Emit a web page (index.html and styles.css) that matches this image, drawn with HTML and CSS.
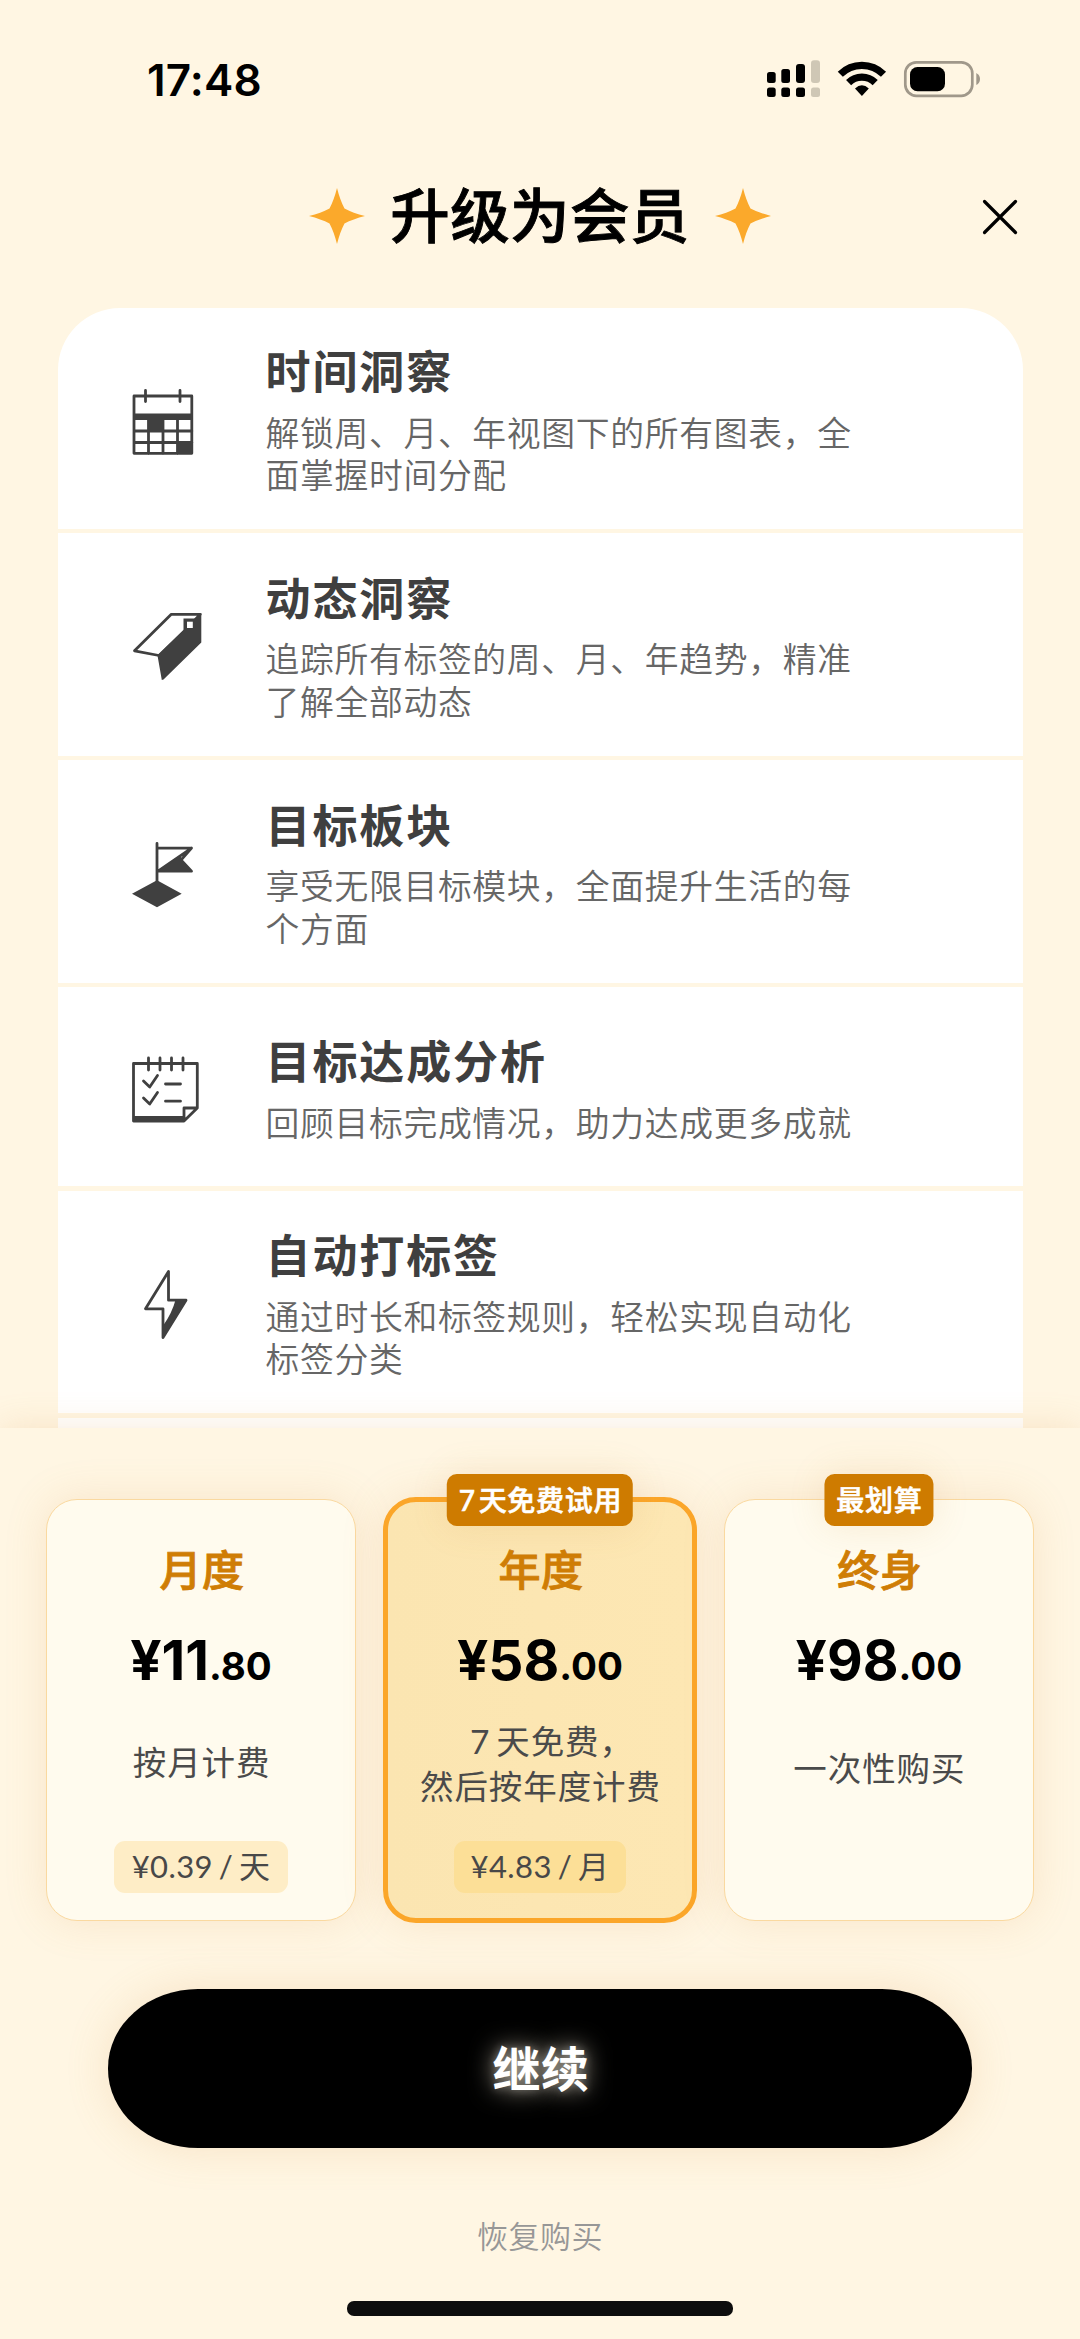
FILE: index.html
```html
<!DOCTYPE html>
<html lang="zh-CN">
<head>
<meta charset="utf-8">
<title>升级为会员</title>
<link rel="stylesheet" href="styles.css">
</head>
<body>
<div class="screen">
  <div class="status">
    <span class="time">17:48</span>
    <svg class="status-icons" width="214" height="40" viewBox="767 59 214 40">
      <g>
        <rect x="767" y="72" width="8.7" height="11" rx="2.5"/><rect x="781.3" y="69" width="8.7" height="14" rx="2.5"/><rect x="796" y="64" width="9" height="19" rx="3"/>
        <rect x="767" y="87.5" width="8.7" height="9.5" rx="2.5"/><rect x="781.3" y="87.5" width="8.7" height="9.5" rx="2.5"/><rect x="796" y="87.5" width="9" height="9.5" rx="2.5"/>
      </g>
      <g fill="#cfc7b5"><rect x="811" y="60.3" width="9" height="22.7" rx="3"/><rect x="811" y="87.5" width="9" height="9.5" rx="2.5"/></g>
      <g fill="none" stroke="#000" stroke-width="7.2">
        <path d="M840.300 74.300 A30.500 30.500 0 0 1 883.500 74.300"/>
        <path d="M848.600 82.600 A18.800 18.800 0 0 1 875.200 82.600"/>
      </g>
      <path d="M861.900 96 L855 88.600 Q861.900 81.800 868.800 88.600 Z"/>
      <rect x="905.300" y="62.300" width="67" height="33.500" rx="11" fill="none" stroke="#a0988a" stroke-width="2.700"/>
      <rect x="910" y="67" width="35" height="24.300" rx="7.500"/>
      <path d="M976.300 73 Q980 75 980 79 T976.300 85 Z" fill="#a0988a"/>
    </svg>
  </div>
  <header class="header">
    <svg class="star" viewBox="0 0 56 56"><path d="M28 0 Q31 12 35.500 20.500 Q44 25 56 28 Q44 31 35.500 35.500 Q31 44 28 56 Q25 44 20.500 35.500 Q12 31 0 28 Q12 25 20.500 20.500 Q25 12 28 0Z"/></svg>
    <h1>升级为会员</h1>
    <svg class="star" viewBox="0 0 56 56"><path d="M28 0 Q31 12 35.500 20.500 Q44 25 56 28 Q44 31 35.500 35.500 Q31 44 28 56 Q25 44 20.500 35.500 Q12 31 0 28 Q12 25 20.500 20.500 Q25 12 28 0Z"/></svg>
    <svg class="close" viewBox="0 0 36 36"><path d="M2.500 2.500 L33.500 33.500 M33.500 2.500 L2.500 33.500"/></svg>
  </header>

  <main class="features">
    <section class="row">
      <svg class="icon" viewBox="130 383.500 75 75">
        <path class="line" d="M134 395.500H191.800V452.800H134Z M145.500 390V401 M180 390V401 M148.500 416V453 M163 416V453 M177.500 416V453 M134 430.500H192 M134 442H192"/>
        <path class="solid" d="M133 413H193V419.500H133Z M148 417H163V430H148Z M177 442H192V453H177Z"/>
      </svg>
      <div class="copy"><h2>时间洞察</h2><p>解锁周、月、年视图下的所有图表，全面掌握时间分配</p></div>
    </section>
    <section class="row">
      <svg class="icon" viewBox="130 609 75 75">
        <path class="line" d="M171.300 614.300H200.300L184.500 631 L159 655.500 L134.500 650.800Z"/>
        <path class="solid" d="M201.300 613.500V642.500L163.500 679.500 L161.800 680 L157.500 655.500 L183.500 630V618.500H195.500L200 613.500Z"/>
        <rect x="187" y="621.700" width="5.800" height="6.300" fill="#fff"/>
      </svg>
      <div class="copy"><h2>动态洞察</h2><p>追踪所有标签的周、月、年趋势，精准了解全部动态</p></div>
    </section>
    <section class="row">
      <svg class="icon" viewBox="130 836.500 75 75">
        <path class="line" d="M157 844V883 M157 848.600H191.500L181 860.500L191.500 871.700H158L191.500 848.600"/>
        <path class="solid" d="M158 872L180.500 856.500L182 860.500L192.500 872.500Z M132 894.200L157 880.800L181.700 894.200L157 907.700Z"/>
      </svg>
      <div class="copy"><h2>目标板块</h2><p>享受无限目标模块，全面提升生活的每个方面</p></div>
    </section>
    <section class="row row-single">
      <svg class="icon" viewBox="130 1052 75 75">
        <path class="line" d="M184 1121H133.500V1063.500H197.300V1108L184 1121V1108H197 M148.500 1058V1070 M160 1058V1070 M171.500 1058V1070 M183 1058V1070 M143.500 1081L149.700 1087L157.500 1075.500 M143.500 1098L149.700 1104L157.500 1092.500 M165.500 1084H180.500 M165.500 1101.200H180.500"/>
        <path class="solid" d="M133 1116H184V1122H133Z"/>
      </svg>
      <div class="copy"><h2>目标达成分析</h2><p>回顾目标完成情况，助力达成更多成就</p></div>
    </section>
    <section class="row">
      <svg class="icon" viewBox="130 1267 75 75">
        <path class="line" d="M168.500 1271.500V1300.200H186L163 1337.500V1308.800H145.500Z"/>
        <path class="solid" d="M175.500 1300H187L162.500 1338.500L163.500 1325Q172 1313 175.500 1300Z"/>
      </svg>
      <div class="copy"><h2>自动打标签</h2><p>通过时长和标签规则，轻松实现自动化标签分类</p></div>
    </section>
    <section class="row"></section>
  </main>

  <div class="sheet">
    <div class="plans">
      <article class="plan">
        <h3>月度</h3>
        <div class="price">¥11<small>.80</small></div>
        <p class="note">按月计费</p>
        <div class="chip">¥0.39 / <span class="unit">天</span></div>
      </article>
      <article class="plan selected">
        <span class="badge">7<i></i>天免费试用</span>
        <h3>年度</h3>
        <div class="price">¥58<small>.00</small></div>
        <p class="note">7<i></i>天免费<span class="comma">，</span><br>然后按年度计费</p>
        <div class="chip">¥4.83 / <span class="unit">月</span></div>
      </article>
      <article class="plan last">
        <span class="badge">最划算</span>
        <h3>终身</h3>
        <div class="price">¥98<small>.00</small></div>
        <p class="note">一次性购买</p>
      </article>
    </div>
    <button class="continue">继续</button>
    <a class="restore">恢复购买</a>
    <div class="home"></div>
  </div>
</div>
</body>
</html>
```
FILE: styles.css
```css
* { box-sizing: border-box; margin: 0; }
body { background: #fff6e3; font-family: Inter, "Noto Sans CJK SC", sans-serif; color: #000; }
.screen { width: 1080px; height: 2339px; display: flex; flex-direction: column; overflow: hidden; background: #fff6e3; }

.status { height: 130px; flex: none; display: flex; justify-content: space-between; align-items: flex-start; padding: 59px 99px 0 147px; }
.time { font-size: 44px; font-weight: 600; line-height: 42px; letter-spacing: 0.2px; }
.status-icons { display: block; }

.header { height: 178px; flex: none; display: flex; justify-content: center; padding-top: 58px; position: relative; }
.star { width: 56px; height: 56px; fill: #fba92b; }
h1 { font-family: "Noto Sans CJK SC", sans-serif; font-size: 59.500px; font-weight: 500; line-height: 56px; margin: -4px 25px 0 25px; letter-spacing: 0.400px; -webkit-text-stroke: 0.900px #000; }
.close { position: absolute; left: 982px; top: 69px; width: 36px; height: 36px; fill: none; stroke: #000; stroke-width: 3.200; stroke-linecap: round; }

.features { height: 1120px; flex: none; margin: 0 57.500px; border-radius: 62px 62px 0 0; overflow: hidden; display: flex; flex-direction: column; gap: 4.500px; }
.row { height: 222.500px; flex: none; background: #fff; display: flex; align-items: flex-start; padding: 31px 0 0 72.500px; }
.row:first-child { height: 220.500px; }
.row-single { height: 199px; padding-top: 42px; }
.icon { width: 75px; height: 75px; flex: none; margin: 45px 60.500px 0 0; }
.row-single .icon { margin-top: 23px; }
.line { fill: none; stroke: #404040; stroke-width: 2.800; stroke-linejoin: round; stroke-linecap: round; }
.solid { fill: #404040; }
.copy { width: 604px; font-family: "Noto Sans CJK SC", sans-serif; padding-top: 2.500px; }
.row:first-child .copy, .row-single .copy { padding-top: 1px; }
h2 { font-size: 45px; font-weight: 700; line-height: 60px; letter-spacing: 1.900px; color: #3f3f3f; }
.copy p { font-size: 33.800px; font-weight: 350; line-height: 42.500px; letter-spacing: 0.680px; margin-top: 10.500px; color: #666; }

.sheet { height: 911px; flex: none; background: #fff6e3; box-shadow: 0 0 34px rgba(215, 150, 70, .2); position: relative; display: flex; flex-direction: column; align-items: center; padding-top: 71px; }
.plans { width: 988.500px; display: grid; grid-template-columns: repeat(3, 310.600px); gap: 28.300px; height: 421.700px; }
.plan { position: relative; background: #fffbee; border: 1.500px solid #fad9a0; border-radius: 31px; display: flex; flex-direction: column; align-items: center; padding-top: 38px; box-shadow: 0 0 42px rgba(215, 150, 70, .17); }
.selected { margin: -2px; border: 5px solid #fba629; border-radius: 33px; background: linear-gradient(90deg, #fbe5b1, #fde7b3); padding-top: 36px; }
.badge { position: absolute; left: 50%; transform: translateX(-50%); top: -26.500px; height: 52px; padding: 0 11px 0 12px; border-radius: 10px; background: #ce7b00; color: #fff; font: 500 28px/52px Lato, "Noto Sans CJK SC", sans-serif; -webkit-text-stroke: 0.600px #fff; letter-spacing: 0.700px; white-space: nowrap; box-shadow: 0 0 36px rgba(200, 140, 60, .15); }
.selected .badge { top: -28px; }
.badge i { display: inline-block; width: 3px; }
.note i { display: inline-block; width: 6px; }
.comma { margin-right: -23px; }
h3 { font: 500 42px/60px "Noto Sans CJK SC", sans-serif; letter-spacing: 0.500px; color: #cf7d05; -webkit-text-stroke: 0.900px #cf7d05; padding-left: 2px; }
.price { font-weight: 700; font-size: 55px; line-height: 60px; margin-top: 32px; letter-spacing: 0; white-space: nowrap; }
.price small { font-size: 38.500px; letter-spacing: 0; }
.note { height: 90px; margin-top: 32px; text-align: center; font: 400 33.500px/44.500px Lato, "Noto Sans CJK SC", sans-serif; letter-spacing: 0.900px; color: #4a4a4a; padding: 12px 0 0 1px; white-space: nowrap; }
.selected .note { margin-top: 23px; margin-bottom: 9px; padding-top: 0; }
.last .note { padding-top: 18px; }
.chip { height: 52px; border-radius: 11px; margin-top: 23px; padding: 0 18px; background: #feedc6; color: #484848; font: 400 31px/50px Lato, "Noto Sans CJK SC", sans-serif; letter-spacing: 0.400px; word-spacing: -2.500px; white-space: nowrap; }
.selected .chip { background: #fcdf97; padding: 0 17px; }

.continue { width: 864px; height: 158.500px; margin-top: 68.500px; border: 0; border-radius: 90px / 79px; background: #000; color: #fff; font: 700 48px/150px "Noto Sans CJK SC", sans-serif; padding: 0 0 5px 2px; letter-spacing: 0.500px; text-shadow: 0 0 24px rgba(255, 244, 220, .75), 0 0 8px rgba(255, 255, 255, .3); box-shadow: 0 0 44px rgba(215, 150, 70, .19); }
.restore { font: 350 31px/40px "Noto Sans CJK SC", sans-serif; letter-spacing: 0.500px; color: #979797; margin-top: 67px; }
.home { width: 386px; height: 15px; margin-top: 46px; border-radius: 7px; background: #0d0d0d; }
```
